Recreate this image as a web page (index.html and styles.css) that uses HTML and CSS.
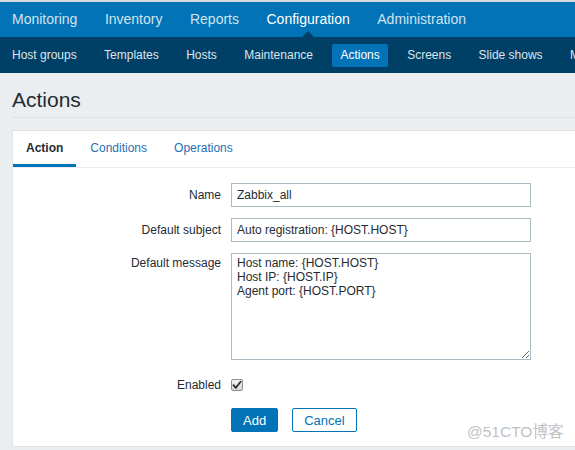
FILE: index.html
```html
<!DOCTYPE html>
<html>
<head>
<meta charset="utf-8">
<link rel="stylesheet" href="styles.css">
</head>
<body>
<div class="topline"></div>
<nav class="mainnav">
  <a class="mainnav-item">Monitoring</a>
  <a class="mainnav-item">Inventory</a>
  <a class="mainnav-item">Reports</a>
  <a class="mainnav-item active">Configuration</a>
  <a class="mainnav-item">Administration</a>
</nav>
<nav class="subnav">
  <a class="subnav-item">Host groups</a>
  <a class="subnav-item">Templates</a>
  <a class="subnav-item">Hosts</a>
  <a class="subnav-item">Maintenance</a>
  <a class="subnav-item active">Actions</a>
  <a class="subnav-item">Screens</a>
  <a class="subnav-item">Slide shows</a>
  <a class="subnav-item">Maps</a>
</nav>
<header class="page-header">
  <h1 class="page-title">Actions</h1>
</header>
<section class="card">
  <ul class="tabs">
    <li class="tab active">Action</li>
    <li class="tab">Conditions</li>
    <li class="tab">Operations</li>
  </ul>
  <form class="form">
    <label class="form-label">Name</label>
    <input class="form-input" type="text" value="Zabbix_all">
    <label class="form-label">Default subject</label>
    <input class="form-input" type="text" value="Auto registration: {HOST.HOST}">
    <label class="form-label label-message">Default message</label>
    <textarea class="form-textarea">Host name: {HOST.HOST}
Host IP: {HOST.IP}
Agent port: {HOST.PORT}</textarea>
    <label class="form-label row-check">Enabled</label>
    <div class="form-field row-check">
      <span class="checkbox"><svg width="10" height="10" viewBox="0 0 10 10"><path d="M1.5 5.2 L3.8 7.8 L8.6 1.8" fill="none" stroke="#2b2b2b" stroke-width="1.8" stroke-linecap="round" stroke-linejoin="round"/></svg></span>
    </div>
    <div></div>
    <div class="form-buttons">
      <button type="button" class="btn btn-primary">Add</button>
      <button type="button" class="btn btn-secondary">Cancel</button>
    </div>
  </form>
</section>
<div class="watermark">@51CTO博客</div>
</body>
</html>
```
FILE: styles.css
```css
html, body {
  margin: 0;
  padding: 0;
}
body {
  width: 575px;
  height: 450px;
  overflow: hidden;
  background: #ebeef0;
  font-family: "Liberation Sans", Arial, sans-serif;
  color: #1f2c33;
  position: relative;
}
.topline {
  height: 2px;
  background: #d6d9db;
}
.mainnav {
  display: flex;
  align-items: center;
  gap: 27.5px;
  height: 35px;
  padding-left: 12px;
  background: #0273b6;
  white-space: nowrap;
}
.mainnav-item {
  position: relative;
  font-size: 14px;
  line-height: 35px;
  color: #d2e3ef;
}
.mainnav-item.active {
  color: #ffffff;
}
.mainnav-item.active::after {
  content: "";
  position: absolute;
  left: 50%;
  bottom: 0;
  margin-left: -6px;
  border-left: 6px solid transparent;
  border-right: 6px solid transparent;
  border-bottom: 6px solid #003f66;
}
.subnav {
  display: flex;
  align-items: center;
  gap: 11.4px;
  height: 36px;
  padding-left: 4px;
  background: #003f66;
  white-space: nowrap;
}
.subnav-item {
  font-size: 12px;
  line-height: 23px;
  padding: 0 8px;
  border-radius: 2px;
  color: #dde6ec;
}
.subnav-item.active {
  background: #0273b6;
  color: #ffffff;
}
.page-header {
  margin: 15px 0 0 12px;
  padding-bottom: 5px;
  border-bottom: 1px solid #dde2e5;
}
.page-title {
  margin: 0;
  font-size: 21px;
  font-weight: normal;
  line-height: 24px;
  color: #1f2c33;
}
.card {
  margin: 12px 0 0 12px;
  width: 600px;
  background: #ffffff;
  border: 1px solid #dfe4e7;
  padding-bottom: 14px;
}
.tabs {
  display: flex;
  margin: 0;
  padding: 0;
  list-style: none;
  height: 36px;
  border-bottom: 1px solid #ebeef0;
}
.tab {
  padding: 1px 13px 0;
  font-size: 12px;
  line-height: 33px;
  color: #1f6fb3;
  border-bottom: 3px solid transparent;
}
.tab + .tab {
  padding-left: 14px;
}
.tab.active {
  color: #1f2c33;
  font-weight: bold;
  border-bottom-color: #0273b6;
}
.form {
  display: grid;
  grid-template-columns: 208px 300px;
  column-gap: 10px;
  row-gap: 11px;
  padding-top: 15px;
}
.form-label {
  justify-self: end;
  align-self: start;
  font-size: 12px;
  line-height: 24px;
  color: #1f2c33;
}
.label-message {
  line-height: 21px;
}
.form-input {
  box-sizing: border-box;
  height: 24px;
  width: 300px;
  margin: 0;
  padding: 0 5px;
  border: 1px solid #acbbc2;
  font-family: "Liberation Sans", Arial, sans-serif;
  font-size: 12px;
  color: #1f2c33;
  outline: none;
}
.form-textarea {
  box-sizing: border-box;
  width: 300px;
  height: 107px;
  margin: 0;
  padding: 2px 5px;
  border: 1px solid #acbbc2;
  font-family: "Liberation Sans", Arial, sans-serif;
  font-size: 12px;
  line-height: 14px;
  color: #1f2c33;
  outline: none;
}
.row-check {
  margin-top: 2px;
}
.form-field {
  display: flex;
  align-items: center;
  height: 24px;
}
.checkbox {
  box-sizing: border-box;
  display: flex;
  align-items: center;
  justify-content: center;
  width: 12px;
  height: 12px;
  border: 1px solid #8e8e8e;
  border-radius: 2px;
  background: linear-gradient(#f4f4f4, #d6d6d6);
}
.form-buttons {
  display: flex;
  gap: 14px;
}
.btn {
  box-sizing: border-box;
  height: 24px;
  padding: 0 11px;
  margin: 0;
  border: 1px solid #0273b6;
  border-radius: 2px;
  font-family: "Liberation Sans", Arial, sans-serif;
  font-size: 13px;
}
.btn-primary {
  background: #0273b6;
  color: #ffffff;
}
.btn-secondary {
  background: #ffffff;
  color: #0273b6;
}
.watermark {
  position: absolute;
  left: 467px;
  top: 422px;
  font-family: "Liberation Sans", "Noto Sans CJK SC", sans-serif;
  font-size: 15.5px;
  line-height: 20px;
  color: #c2c2c2;
  white-space: nowrap;
}
```
